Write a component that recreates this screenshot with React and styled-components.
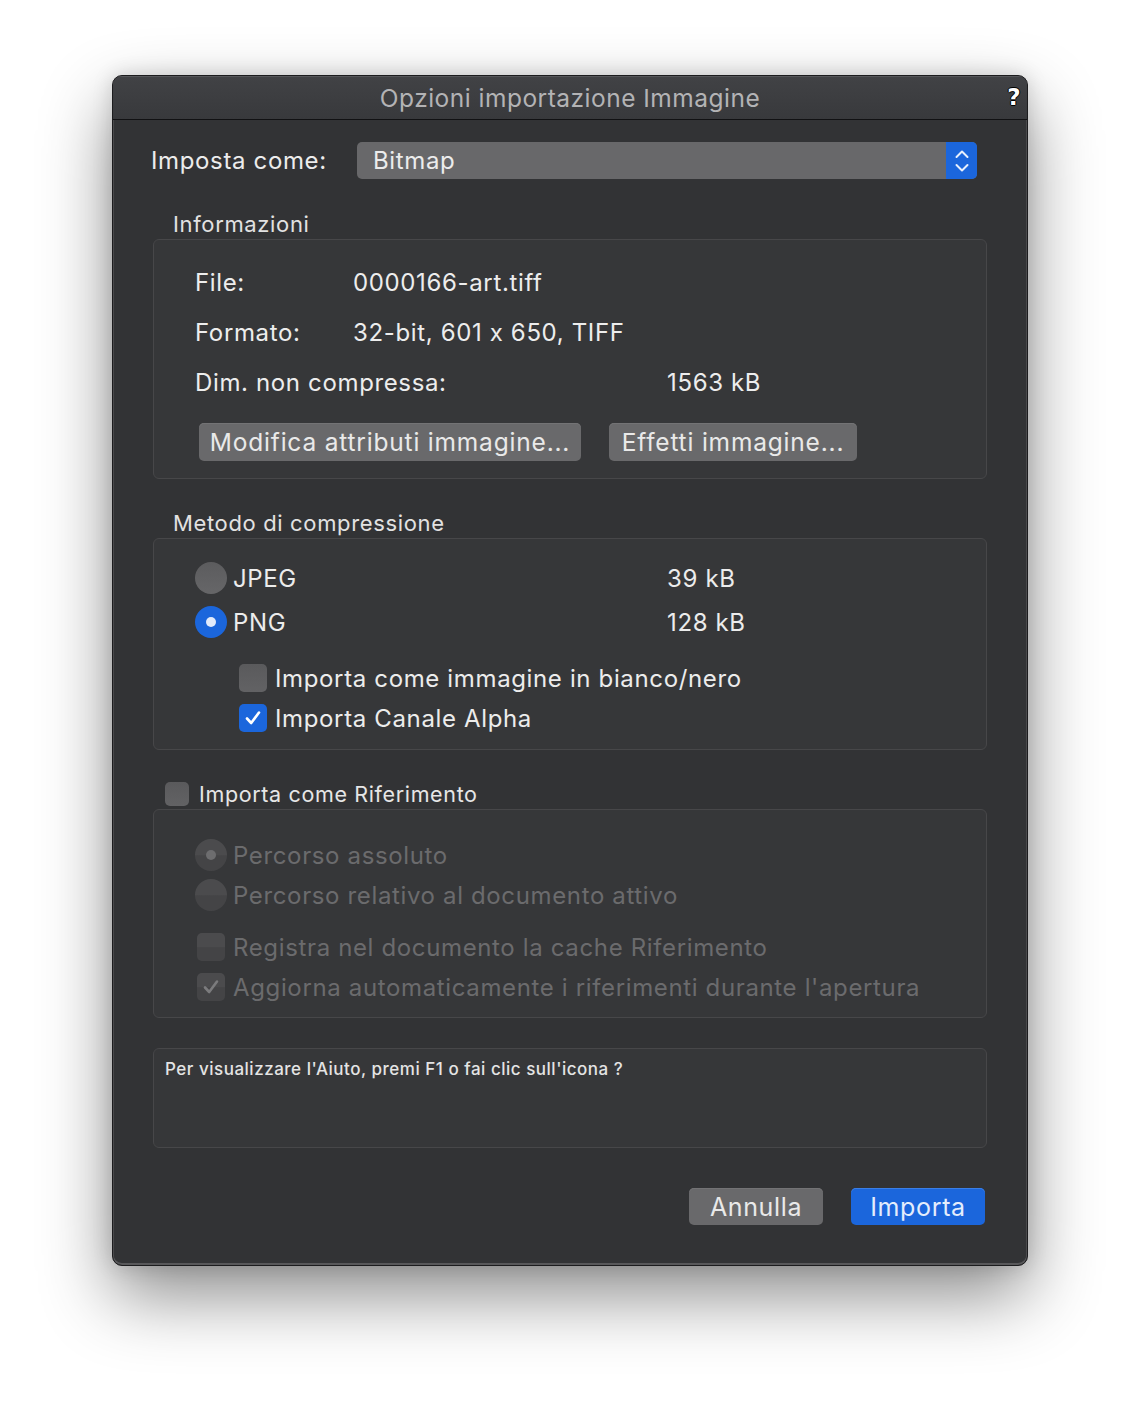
import React from "react";
import styled, { createGlobalStyle } from "styled-components";

const Global = createGlobalStyle`
  html, body { margin: 0; padding: 0; background: #ffffff; }
  body { font-family: Inter, "Noto Sans", "Liberation Sans", sans-serif; -webkit-font-smoothing: antialiased; }
  #root { min-height: 1414px; }
`;

const Page = styled.div`
  width: 1140px;
  height: 1414px;
  padding: 75px 0 0 112px;
  box-sizing: border-box;
`;

const Window = styled.div`
  width: 916px;
  height: 1191px;
  box-sizing: border-box;
  background: #323335;
  border: 1px solid #1c1c1e;
  border-radius: 10px;
  box-shadow: inset 0 -2px 0 #58585a, inset 1px 0 0 #4a4a4c, inset -1px 0 0 #4a4a4c,
    0 30px 70px rgba(0, 0, 0, 0.45), 0 0 20px rgba(0, 0, 0, 0.15);
  display: flex;
  flex-direction: column;
  overflow: hidden;
  letter-spacing: 0.04em;
  font-feature-settings: "calt" 0;
`;

const TitleBar = styled.div`
  height: 44px;
  flex: none;
  position: relative;
  display: flex;
  align-items: center;
  justify-content: center;
  background: linear-gradient(#414245, #38393c);
  border-bottom: 1px solid #111113;
  border-top: 1px solid #56575a;
  box-sizing: border-box;
  color: #b3b3b5;
  font-size: 24.5px;
  letter-spacing: 0.02em;
`;

const HelpMark = styled.span`
  position: absolute;
  right: 6px;
  top: 7px;
  font-family: "DejaVu Sans", sans-serif;
  font-weight: 700;
  font-size: 23px;
  color: #ffffff;
  text-shadow: 1px 0 0 #000, -1px 0 0 #000, 0 1px 0 #000, 0 -1px 0 #000;
`;

const Content = styled.div`
  flex: 1;
  display: flex;
  flex-direction: column;
  padding: 22px 40px 0 40px;
`;

const SelectRow = styled.div`
  display: flex;
  align-items: center;
  margin: 0 10px 0 -2px;
`;

const RowLabel = styled.div`
  width: 206px;
  flex: none;
  color: #ececec;
  font-size: 24px;
`;

const Select = styled.div`
  flex: 1;
  height: 37px;
  border-radius: 5px;
  background: #68686a;
  display: flex;
  align-items: center;
  overflow: hidden;
  color: #ececec;
  font-size: 24px;
`;

const SelectValue = styled.span`
  flex: 1;
  padding-left: 16px;
`;

const Stepper = styled.div`
  width: 31px;
  height: 100%;
  background: #1b66dc;
  display: flex;
  align-items: center;
  justify-content: center;
`;

const SectionLabel = styled.div`
  height: 28px;
  line-height: 28px;
  margin: ${(p) => p.$top}px 0 1px 20px;
  color: #e2e2e2;
  font-size: 22px;
`;

const Box = styled.div`
  border: 1px solid #474749;
  border-radius: 6px;
  background: #363739;
  display: flex;
  flex-direction: column;
  padding: ${(p) => p.$pad};
  box-sizing: border-box;
`;

const InfoRow = styled.div`
  display: flex;
  align-items: center;
  height: 30px;
  margin-bottom: 20px;
  color: #ededed;
  font-size: 24px;
`;

const InfoKey = styled.span`
  width: ${(p) => p.$w}px;
  flex: none;
`;

const ButtonRow = styled.div`
  display: flex;
  gap: 28px;
  margin-left: 4px;
  margin-top: 6px;
`;

const GreyButton = styled.div`
  height: 38px;
  padding: 0 10px;
  border-radius: 5px;
  background: #69696b;
  box-shadow: inset 0 1px 0 #737375;
  display: flex;
  align-items: center;
  justify-content: center;
  color: #e9e9e9;
  font-size: 24.5px;
  letter-spacing: 0.033em;
  white-space: nowrap;
  width: ${(p) => (p.$w ? p.$w + "px" : "auto")};
  box-sizing: border-box;
`;

const OptionRow = styled.div`
  display: flex;
  align-items: center;
  height: ${(p) => p.$h}px;
  margin-top: ${(p) => p.$top || 0}px;
  margin-left: ${(p) => p.$indent || 0}px;
  gap: ${(p) => p.$gap}px;
  color: ${(p) => (p.$disabled ? "#6b6b6d" : "#ececec")};
  font-size: 24px;
  white-space: nowrap;
`;

const OptionText = styled.span`
  width: ${(p) => (p.$w ? p.$w + "px" : "auto")};
  flex: none;
`;

const Radio = styled.div`
  width: 32px;
  height: 32px;
  border-radius: 50%;
  flex: none;
  display: flex;
  align-items: center;
  justify-content: center;
  background: ${(p) =>
    p.$checked
      ? "#1b66dc"
      : p.$disabled
      ? "linear-gradient(#4b4b4d 0%, #4b4b4d 50%, #444446 52%, #444446 100%)"
      : "linear-gradient(#5c5c5e, #666668)"};
  &::after {
    content: "";
    display: ${(p) => (p.$dot ? "block" : "none")};
    width: 10px;
    height: 10px;
    border-radius: 50%;
    background: ${(p) => (p.$disabled ? "#6d6d6f" : "#e2ebfb")};
  }
`;

const Check = styled.div`
  width: ${(p) => p.$size}px;
  height: ${(p) => p.$size}px;
  border-radius: 5px;
  flex: none;
  display: flex;
  align-items: center;
  justify-content: center;
  background: ${(p) =>
    p.$checked && !p.$disabled
      ? "#1b66dc"
      : p.$disabled
      ? "linear-gradient(#4b4b4d 0%, #4b4b4d 50%, #444446 52%, #444446 100%)"
      : "linear-gradient(#5a5a5c, #626264)"};
`;

const RefHeader = styled.div`
  display: flex;
  align-items: center;
  gap: 10px;
  height: 28px;
  margin: 30px 0 1px 12px;
  color: #e6e6e6;
  font-size: 21.5px;
`;

const HelpBox = styled.div`
  margin-top: 30px;
  height: 100px;
  box-sizing: border-box;
  border: 1px solid #474749;
  border-radius: 6px;
  background: #363739;
  padding: 9px 11px;
  color: #e4e4e4;
  font-size: 17px;
  line-height: 22px;
  font-weight: 500;
  letter-spacing: 0.03em;
`;

const Footer = styled.div`
  display: flex;
  justify-content: flex-end;
  gap: 28px;
  margin: 40px 2px 0 0;
`;

const DialogButton = styled.div`
  width: 134px;
  height: 37px;
  border-radius: 5px;
  background: ${(p) => (p.$primary ? "#1b66dc" : "#69696b")};
  box-shadow: inset 0 1px 0 ${(p) => (p.$primary ? "#3b7fe6" : "#737375")};
  display: flex;
  align-items: center;
  justify-content: center;
  color: ${(p) => (p.$primary ? "#e4edfc" : "#e9e9e9")};
  font-size: 25px;
`;

const CheckMark = ({ color, size = 18 }) => (
  <svg width={size} height={size} viewBox="0 0 18 18">
    <path d="M3 9.5 L7.2 14 L15 3.5" fill="none" stroke={color} strokeWidth="2.6" strokeLinecap="round" strokeLinejoin="round" />
  </svg>
);

const Chevrons = () => (
  <svg width="16" height="28" viewBox="0 0 16 28">
    <path d="M2.5 10 L8 4.5 L13.5 10" fill="none" stroke="#e8f0fd" strokeWidth="2" strokeLinecap="round" strokeLinejoin="round" />
    <path d="M2.5 18 L8 23.5 L13.5 18" fill="none" stroke="#e8f0fd" strokeWidth="2" strokeLinecap="round" strokeLinejoin="round" />
  </svg>
);

export default function App() {
  return (
    <Page>
      <Global />
      <Window>
        <TitleBar>
          Opzioni importazione Immagine
          <HelpMark>?</HelpMark>
        </TitleBar>
        <Content>
          <SelectRow>
            <RowLabel>Imposta come:</RowLabel>
            <Select>
              <SelectValue>Bitmap</SelectValue>
              <Stepper>
                <Chevrons />
              </Stepper>
            </Select>
          </SelectRow>

          <SectionLabel $top={31}>Informazioni</SectionLabel>
          <Box $pad="27px 20px 17px 41px">
            <InfoRow>
              <InfoKey $w={158}>File:</InfoKey>
              <span>0000166-art.tiff</span>
            </InfoRow>
            <InfoRow>
              <InfoKey $w={158}>Formato:</InfoKey>
              <span>32-bit, 601 x 650, TIFF</span>
            </InfoRow>
            <InfoRow>
              <InfoKey $w={472}>Dim. non compressa:</InfoKey>
              <span>1563 kB</span>
            </InfoRow>
            <ButtonRow>
              <GreyButton $w={382}>Modifica attributi immagine...</GreyButton>
              <GreyButton $w={248}>Effetti immagine...</GreyButton>
            </ButtonRow>
          </Box>

          <SectionLabel $top={30}>Metodo di compressione</SectionLabel>
          <Box $pad="23px 20px 16px 41px">
            <OptionRow $h={32} $gap={6}>
              <Radio />
              <OptionText $w={428}>JPEG</OptionText>
              <span>39 kB</span>
            </OptionRow>
            <OptionRow $h={32} $gap={6} $top={12}>
              <Radio $checked $dot />
              <OptionText $w={428}>PNG</OptionText>
              <span>128 kB</span>
            </OptionRow>
            <OptionRow $h={30} $gap={8} $top={25} $indent={44}>
              <Check $size={28} />
              <span>Importa come immagine in bianco/nero</span>
            </OptionRow>
            <OptionRow $h={30} $gap={8} $top={10} $indent={44}>
              <Check $size={28} $checked>
                <CheckMark color="#ffffff" />
              </Check>
              <span>Importa Canale Alpha</span>
            </OptionRow>
          </Box>

          <RefHeader>
            <Check $size={24} />
            <span>Importa come Riferimento</span>
          </RefHeader>
          <Box $pad="29px 20px 15px 41px">
            <OptionRow $h={32} $gap={6} $disabled>
              <Radio $disabled $dot />
              <span>Percorso assoluto</span>
            </OptionRow>
            <OptionRow $h={32} $gap={6} $top={8} $disabled>
              <Radio $disabled />
              <span>Percorso relativo al documento attivo</span>
            </OptionRow>
            <OptionRow $h={30} $gap={8} $top={21} $indent={2} $disabled>
              <Check $size={28} $disabled />
              <span>Registra nel documento la cache Riferimento</span>
            </OptionRow>
            <OptionRow $h={30} $gap={8} $top={10} $indent={2} $disabled>
              <Check $size={28} $disabled $checked>
                <CheckMark color="#7b7b7d" />
              </Check>
              <span>Aggiorna automaticamente i riferimenti durante l'apertura</span>
            </OptionRow>
          </Box>

          <HelpBox>Per visualizzare l'Aiuto, premi F1 o fai clic sull'icona ?</HelpBox>

          <Footer>
            <DialogButton>Annulla</DialogButton>
            <DialogButton $primary>Importa</DialogButton>
          </Footer>
        </Content>
      </Window>
    </Page>
  );
}
